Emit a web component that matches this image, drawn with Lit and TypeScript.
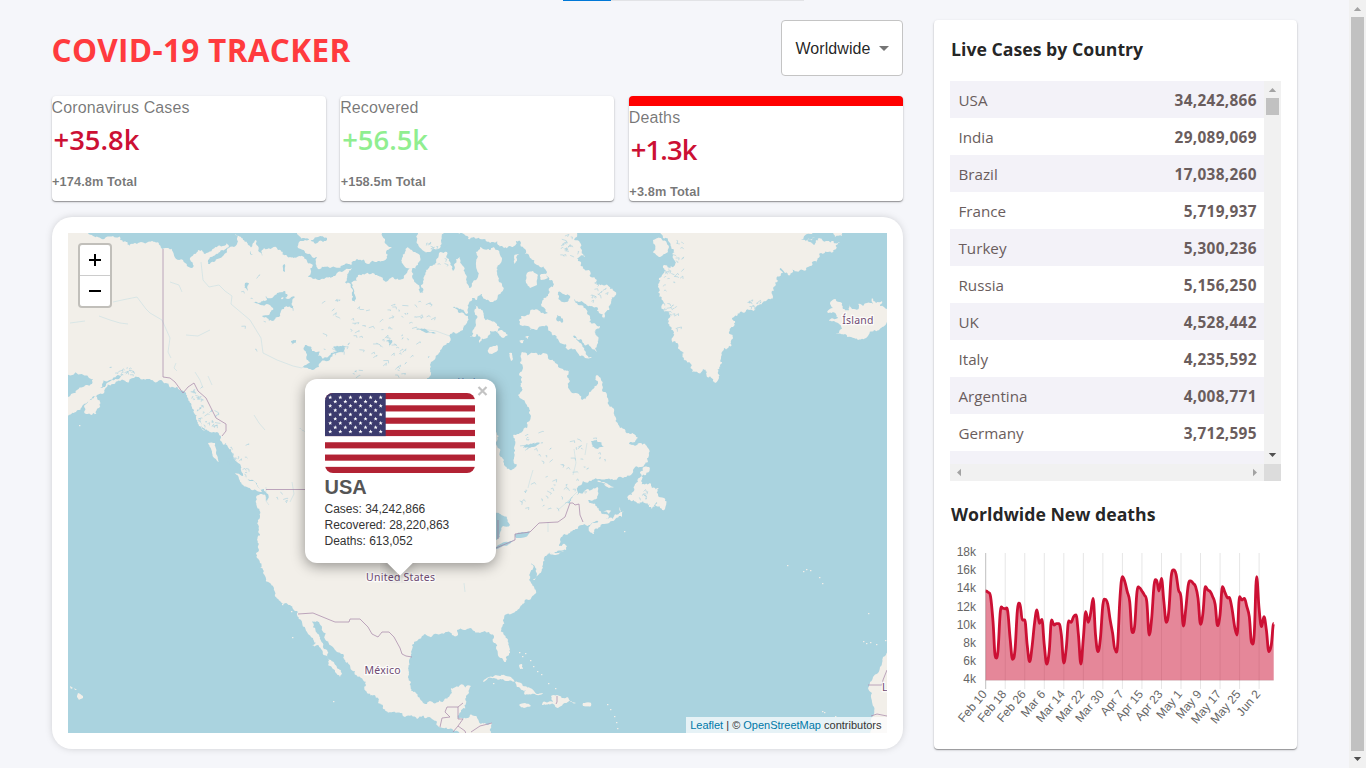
import { LitElement, html, svg, css } from "lit";
import { customElement } from "lit/decorators.js";

type Pt = [number, number];

const COUNTRIES: [string, string][] = [
  ["USA", "34,242,866"],
  ["India", "29,089,069"],
  ["Brazil", "17,038,260"],
  ["France", "5,719,937"],
  ["Turkey", "5,300,236"],
  ["Russia", "5,156,250"],
  ["UK", "4,528,442"],
  ["Italy", "4,235,592"],
  ["Argentina", "4,008,771"],
  ["Germany", "3,712,595"],
];

/* ---------- geometry helpers ---------- */

function parse(s: string): Pt[] {
  return s.trim().split(/\s+/).map((p) => p.split(",").map(Number) as Pt);
}

function random(seed: number) {
  let a = seed;
  return () => {
    a = (a * 1664525 + 1013904223) % 4294967296;
    return a / 4294967296;
  };
}

/* Midpoint displacement gives the coastlines their ragged edge. */
function coast(s: string, rough: number, seed: number): string {
  const rnd = random(seed);
  let pts = parse(s);
  for (let step = 0; step < 4; step++) {
    const out: Pt[] = [];
    pts.forEach((p, i) => {
      const q = pts[(i + 1) % pts.length];
      out.push(p);
      const dx = q[0] - p[0];
      const dy = q[1] - p[1];
      const len = Math.hypot(dx, dy);
      if (len > 2) {
        const k = (rnd() - 0.5) * rough * Math.min(1, 14 / len);
        out.push([(p[0] + q[0]) / 2 - dy * k, (p[1] + q[1]) / 2 + dx * k]);
      }
    });
    pts = out;
  }
  return "M" + pts.map((p) => p[0].toFixed(1) + "," + p[1].toFixed(1)).join("L") + "Z";
}

const MAINLAND = `60,225 86,225 88,233 93,236 113,236 123,242 137,244 148,242 162,249 173,252 183,260 194,266
190,258 202,250 205,254 217,247 227,242 229,246 220,252 211,257 208,264 214,262 224,255 234,247 238,241 235,234 243,240
250,253 253,255 253,243 256,240 259,252 262,256 264,248 277,248 290,257 307,261 313,265 311,272 308,277 320,280 331,278
345,270 352,268 347,274 345,282 352,294 355,302 354,290 351,283 358,275 371,274 377,275 383,280 392,277 403,279 408,270 412,268 414,280
420,293 424,294 421,285 423,278 433,265 440,252 447,252 450,262 453,271 456,259 460,257 464,267 466,280 469,288 473,282 477,270 480,247
493,247 502,258 499,265 497,272 503,287 498,295 490,302 482,294 477,300 472,298 469,303 467,314 458,308 453,307 460,313 468,316 467,323 463,330 453,332 449,343
437,355 430,365 427,378 430,400 455,425 480,430 496,432 498,448 504,460 510,470 517,465 515,450 513,435 522,432 527,428 529,412 527,405 518,395 522,382 523,368 520,362
522,352 533,353 543,353 550,360 558,365 563,369 570,370 570,381 572,393 582,400 588,396 592,390 597,375 602,385 607,395 613,408 616,418 620,428
630,434 638,438 630,442 623,449 632,445 640,443 648,448 648,462 641,467 633,470 623,478 612,479 600,479 583,481 577,490 570,500
562,507 557,510 570,503 577,495 587,489 597,487 598,495 588,500 591,503 597,507 602,514 609,517 605,521 596,521 590,525 582,525 573,530 563,535
560,540 559,546 567,546 566,550 555,552 547,555 543,562 543,568 537,576 533,580 536,572 531,563 530,573 529,580 534,587 534,595 529,600 522,605 513,613 503,620
502,627 504,635 509,646 509,655 506,662 502,658 497,650 494,643 494,636 489,632 485,631 480,633 472,629 464,630 457,630 458,635 452,635 447,632 437,634
425,634 418,640 412,645 411,652 409,662 409,672 411,682 418,697 427,704 436,703 443,702 449,697 451,688 460,685 471,686 469,693 466,703 461,712 458,718 463,719
477,718 492,723 491,733 491,740 462,740 455,731 443,728 437,722 430,717 417,719 405,717 390,712 378,703 367,693 366,685 363,680 355,671 343,658 343,654 335,650
330,645 325,639 322,628 319,622 312,620 313,627 317,633 321,641 327,650 331,660 337,668 342,674 340,677 335,672 328,665 327,656 321,649 312,645 316,643
311,637 307,632 301,620 298,612 290,605 280,601 275,592 270,583 265,576 260,568 259,560 257,558 259,550 257,540 259,530 260,517 257,507 256,497 262,494 267,501 268,494
264,489 257,483 253,480 245,478 241,470 237,462 233,455 227,445 221,438 217,432 210,432 203,428 197,415 192,407 188,398 181,391 173,387 166,383 160,380 148,379 137,377 133,378
128,383 120,381 113,384 105,389 102,394 97,395 89,401 83,405 76,412 60,422 60,398 68,397 77,390 83,387 92,384 100,375 104,369 112,367 108,372 103,378 100,388 106,384 112,380 119,379
121,376 113,378 103,380 60,370`;

const ISLANDS: [string, number][] = [
  ["300,225 297,234 318,237 327,238 326,241 305,240 299,242 298,248 308,254 317,257 316,262 320,269 330,268 343,265 357,259 368,264 378,261 387,258 386,252 392,248 385,239 382,233 382,225", 0.5],
  ["416,228 417,240 418,244 430,252 438,249 441,241 444,233 444,228", 0.5],
  ["402,258 405,252 408,247 415,252 420,257 418,265 411,269 405,267", 0.5],
  ["455,225 459,234 468,239 480,239 490,243 502,246 512,247 516,241 521,243 525,254 530,258 537,265 547,272 553,287 548,296 542,303 548,313 541,313 530,312 521,316 520,325 530,330 543,326 551,332 560,343 568,350 577,352 585,358 592,358 584,350 579,342 573,336 581,339 591,347 597,352 597,345 600,338 593,332 600,326 589,322 587,313 578,305 574,299 584,303 592,306 599,313 604,319 609,310 611,302 616,295 610,289 597,280 589,270 581,262 577,258 585,257 581,249 574,240 577,233 577,225", 0.65],
  ["475,305 479,309 483,312 489,320 500,328 497,332 490,331 487,338 480,343 477,334 470,337 474,329", 0.6],
  ["497,332 502,330 508,335 503,338", 0.4],
  ["488,352 490,347 497,345 498,350 492,354", 0.4],
  ["509,353 512,353 513,359 511,361", 0.3],
  ["527,273 533,271 538,275 537,285 530,288 526,283", 0.3],
  ["540,275 546,274 548,278 541,280", 0.4],
  ["519,341 524,340 523,343", 0.4],
  ["525,337 529,336 528,339", 0.4],
  ["514,256 519,254 517,261 514,264", 0.5],
  ["653,225 655,233 663,238 670,243 674,250 673,258 675,265 664,265 659,278 659,288 662,305 666,311 668,322 672,338 680,350 684,358 692,372 703,369 707,377 715,383 719,378 722,362 724,348 733,338 735,321 732,318 740,312 749,310 753,311 767,300 774,290 775,283 783,273 780,268 788,275 800,270 817,263 828,252 840,243 827,241 819,238 805,244 815,237 800,239 812,234 817,225", 0.7],
  ["653,240 661,238 669,247 668,252 660,257 653,252", 0.4],
  ["829,225 835,237 842,236 843,225", 0.4],
  ["827,312 833,308 830,304 835,299 842,303 845,310 849,310 850,304 854,309 859,308 858,304 863,306 867,303 873,304 872,298 876,303 882,301 880,306 884,307 888,313 888,320 882,327 874,330 868,336 858,340 851,337 845,334 836,334 842,329 838,323 829,321 838,318 833,312", 0.5],
  ["628,500 633,492 637,480 640,472 644,467 649,467 646,475 641,481 650,483 652,488 659,488 658,494 664,498 665,509 660,508 657,502 649,507 652,501 643,501", 0.8],
  ["597,481 603,482 614,487 609,488", 0.3],
  ["590,526 594,523 601,521 613,519 619,507 621,512 624,511 622,517 612,521 600,527 594,534 590,532", 0.6],
  ["603,511 611,511 609,514", 0.4],
  ["543,556 553,553 564,551 556,555", 0.3],
  ["483,682 489,677 496,675 511,677 521,683 530,688 543,693 535,694 524,694 526,690 517,687 512,681 503,679 494,678", 0.4],
  ["551,696 557,695 567,697 576,703 563,704 558,708 551,704 542,705 543,702 553,702", 0.4],
  ["519,705 525,703 531,706 524,708", 0.3],
  ["583,703 591,703 591,706 583,706", 0.3],
  ["888,652 883,657 880,667 873,677 870,682 868,688 872,693 874,707 871,720 870,738 890,738", 0.3],
  ["85,408 88,402 97,397 100,402 97,409 92,415 86,414", 0.7],
  ["208,443 215,443 216,453 219,462 212,453", 0.3],
  ["235,473 242,476 252,481 258,487 262,492 257,491 247,487 239,479", 0.4],
  ["78,693 83,696 83,698 79,700 77,697", 0.2],
  ["74,688 77,690 75,690", 0.2],
  ["70,686 73,688 71,689", 0.2],
  ["519,665 522,664 523,669 520,669", 0.3],
  ["196,415 201,423 205,431 199,426", 0.5],
];

const LAKES: [string, number][] = [
  ["253,302 258,303 267,300 266,296 275,295 285,291 287,294 281,299 288,299 295,297 293,308 286,306 281,311 279,317 272,321 262,316 269,315 273,308 267,304 259,304", 0.6],
  ["302,368 306,365 310,362 306,353 305,345 312,351 320,352 318,356 323,359 331,353 340,347 346,346 340,352 333,354 328,361 321,362 319,367 313,370", 0.5],
  ["490,512 499,513 507,517 510,525 503,526 500,537 496,540 490,538", 0.4],
  ["496,547 505,542 515,539 511,543 503,546 496,549", 0.3],
  ["515,534 522,532 530,531 528,535 516,538", 0.3],
  ["291,341 296,340 297,344 292,343", 0.5],
  ["306,432 302,430 299,428", 0.3],
  ["558,292 563,294 570,298 566,302 560,300 559,296", 0.6],
  ["557,315 563,319 562,323 557,321", 0.6],
  ["591,441 598,442 604,446 598,449 594,447", 0.8],
  ["524,447 532,444 540,443 532,447", 0.5],
  ["386,341 392,340 390,347", 0.6],
  ["333,347 341,346 345,349 337,351", 0.4],
  ["283,265 285,264 285,272 283,271", 0.2],
  ["245,283 249,283 247,291", 0.4],
  ["416,329 427,330 436,333 427,333", 0.4],
];

const RIVERS = [
  "201,262 203,280 209,287 219,285 225,291 232,296 231,304 250,320 261,338 263,353 277,360 293,366 302,368",
  "113,302 127,299 137,297 146,309 150,313 162,320 170,338 168,352 171,358",
  "70,323 85,321",
  "99,316 110,320 120,323 128,324",
  "558,510 566,503 577,492",
  "455,338 436,331 420,329",
  "170,282 179,285 182,292",
  "210,330 198,336 186,335",
  "254,415 259,423 265,430",
  "195,372 200,380 203,388",
  "208,376 212,385",
  "176,363 174,368 177,371",
  "292,482 294,494 290,502",
  "533,470 530,480 528,488",
  "574,449 576,463 573,475",
  "587,443 585,455",
  "464,583 465,592",
  "266,487 266,501 269,505",
  "548,522 548,532",
];

const BORDERS = [
  "163,249 163,377 170,378 175,382 183,393 188,387 194,383 198,391 206,398 216,418 226,424 226,431 222,436",
  "266,489.5 320,489.5",
  "496,548 515,540 515,534 530,532 539,523 558,522 565,517 570,503 573,503 575,505 579,504 580,515 583,522",
  "298,614 313,613 330,620 335,622 349,622 350,619 360,619 368,627 372,634 378,637 382,632 389,632 394,637 400,648 402,654 406,656 412,657",
  "463,703 458,707 447,707 445,712 450,717 442,718 440,727",
  "458,707 458,719 463,719 458,726 453,732",
  "458,726 465,731 466,734",
  "471,732 480,726 492,723",
  "498,520 498,539",
  "868,685 882,685 883,680 887,670",
  "871,716 877,714 887,716",
  "557,696 557,702 556,704",
];

const SPECKS: [number, number][] = [
  [519, 652], [522, 656], [525, 653], [530, 660], [533, 666], [537, 671], [541, 674], [548, 683], [555, 688],
  [607, 704], [610, 709], [614, 716], [616, 722], [617, 728], [787, 565], [803, 571], [806, 569], [810, 570],
  [819, 577], [822, 583], [868, 613], [863, 641], [866, 643], [870, 642], [876, 644], [885, 640], [822, 711], [824, 712], [835, 716],
  [292, 637], [282, 604], [291, 611], [333, 701], [624, 531], [79, 425], [493, 683],
];

function scatter(seed: number, n: number, x: number, y: number, w: number, h: number) {
  const r = random(seed);
  let d = "";
  for (let i = 0; i < n; i++) {
    const px = x + r() * w;
    const py = y + r() * h;
    const len = 1 + r() * 4;
    const ang = r() * 1.4 - 0.9;
    const mx = px + Math.cos(ang) * len;
    const my = py + Math.sin(ang) * len;
    d += `M${px.toFixed(1)},${py.toFixed(1)}L${mx.toFixed(1)},${my.toFixed(1)}l${(r() * 3 - 1.5).toFixed(1)},${(r() * 3).toFixed(1)}`;
  }
  return d;
}

const SHIELD =
  scatter(11, 46, 330, 300, 90, 72) + scatter(5, 26, 382, 300, 50, 60) + scatter(9, 14, 235, 270, 90, 90) +
  scatter(21, 44, 520, 432, 85, 60) + scatter(31, 14, 512, 488, 55, 22) + scatter(41, 14, 332, 345, 95, 33);
const FJORDS =
  scatter(3, 30, 222, 445, 25, 30) + scatter(8, 24, 196, 405, 20, 22) + scatter(14, 14, 115, 368, 25, 10) +
  scatter(17, 32, 661, 268, 18, 66) + scatter(19, 20, 560, 236, 20, 20) + scatter(23, 14, 590, 282, 18, 20) +
  scatter(27, 14, 746, 300, 14, 9) + scatter(29, 12, 672, 240, 10, 40) + scatter(33, 16, 425, 238, 22, 30) +
  scatter(37, 10, 637, 484, 22, 18) + scatter(43, 12, 190, 388, 12, 14) + scatter(47, 4, 270, 484, 25, 25);

/* ---------- chart data: height of each day's value on the plot ---------- */

const DAYS = [
  168, 172, 185, 260, 368, 350, 230, 220, 221, 228, 310, 373, 345, 225, 205, 255, 255, 330, 380, 335,
  265, 225, 265, 253, 330, 387, 350, 255, 270, 266, 266, 300, 384, 340, 258, 262, 245, 240, 300, 387,
  310, 230, 262, 235, 190, 300, 350, 310, 210, 193, 207, 255, 295, 345, 335, 190, 125, 140, 170, 200,
  292, 275, 170, 158, 168, 180, 200, 300, 250, 150, 135, 168, 130, 200, 262, 230, 125, 105, 118, 165,
  185, 273, 220, 150, 138, 145, 155, 190, 268, 235, 155, 165, 170, 185, 208, 272, 240, 155, 172, 188,
  190, 225, 275, 300, 185, 195, 190, 215, 245, 325, 300, 125, 220, 275, 245, 285, 350, 330, 265,
];

function chartLine(): string {
  const p: Pt[] = DAYS.map((v, i) => [35.7 + (i * 288) / (DAYS.length - 1), v / 3 - 5]);
  const slope = p.map((_, i) => {
    if (i === 0 || i === p.length - 1) return 0;
    const a = p[i][1] - p[i - 1][1];
    const b = p[i + 1][1] - p[i][1];
    return a * b <= 0 ? 0 : (a + b) / 2;
  });
  let d = `M${p[0][0]},${p[0][1]}`;
  for (let i = 1; i < p.length; i++) {
    const w = (p[i][0] - p[i - 1][0]) * 0.38;
    d += `C${(p[i - 1][0] + w).toFixed(2)},${(p[i - 1][1] + slope[i - 1] * 0.38).toFixed(2)} ${(p[i][0] - w).toFixed(2)},${(p[i][1] - slope[i] * 0.38).toFixed(2)} ${p[i][0].toFixed(2)},${p[i][1].toFixed(2)}`;
  }
  return d;
}

const X_TICKS = ["Feb 10", "Feb 18", "Feb 26", "Mar 6", "Mar 14", "Mar 22", "Mar 30", "Apr 7", "Apr 15", "Apr 23", "May 1", "May 9", "May 17", "May 25", "Jun 2"];
const Y_TICKS = ["18k", "16k", "14k", "12k", "10k", "8k", "6k", "4k"];

@customElement("world-map")
class WorldMap extends LitElement {
  static styles = css`
    :host { display: block; position: relative; width: 819px; height: 500px; overflow: hidden; background: #aad3df; font-family: "Liberation Sans", Arial, sans-serif; }
    .tiles { display: block; }
    .land { fill: #f2efe9; }
    .lake { fill: #aad3df; }
    .river { fill: none; stroke: #aad3df; stroke-width: 0.7; opacity: 0.5; }
    .speck { fill: none; stroke: #aad3df; stroke-width: 0.9; opacity: 0.7; }
    .border { fill: none; stroke: #a98bab; stroke-width: 1; opacity: 0.75; }
    .label { font-family: "Noto Sans", sans-serif; font-size: 10.5px; letter-spacing: 0.25px; fill: #6f4b73; stroke: #fff; stroke-opacity: 0.8; stroke-width: 2.4px; paint-order: stroke; text-anchor: middle; }
    .sea { font-size: 9px; letter-spacing: 0; fill: #4d6fae; stroke: none; }
    .zoom { position: absolute; left: 10px; top: 10px; width: 30px; border: 2px solid rgba(0, 0, 0, 0.2); border-radius: 4px; background: #fff; background-clip: padding-box; }
    .zoom div { height: 30px; display: grid; place-items: center; }
    .zoom div:first-child { border-bottom: 1px solid #ccc; }
    .popup { position: absolute; left: 237px; top: 146px; width: 191px; height: 184px; }
    .tipbox { position: absolute; left: 75.5px; top: 184px; width: 40px; height: 20px; overflow: hidden; }
    .tip { width: 18px; height: 18px; margin: -9px auto 0; transform: rotate(45deg); background: #fff; box-shadow: 0 3px 14px rgba(0, 0, 0, 0.4); }
    .bubble { box-sizing: border-box; height: 184px; padding: 14px 20px; border-radius: 12px; background: #fff; box-shadow: 0 3px 14px rgba(0, 0, 0, 0.4); color: #333; }
    .flag { display: block; border-radius: 8px; }
    .name { font-size: 20px; font-weight: 700; line-height: 28px; color: #555; }
    .row { font-size: 12px; line-height: 16px; }
    .close { position: absolute; right: 8px; top: 7px; }
    .credit { position: absolute; right: 0; bottom: 0; padding: 0 5px 0 4px; height: 16px; line-height: 16px; font-size: 11px; color: #333; background: rgba(255, 255, 255, 0.7); white-space: nowrap; }
    .credit a { color: #0078a8; }
  `;

  private flag() {
    const stars = [];
    for (let r = 0; r < 9; r++) {
      const n = r % 2 ? 5 : 6;
      for (let c = 0; c < n; c++) {
        const x = 5.2 + c * 10.1 + (r % 2 ? 5.05 : 0);
        const y = 4.4 + r * 4.28;
        stars.push(svg`<path transform="translate(${x} ${y})" fill="#fff" d="M0-2.1 .6-.65 2-.65 .9.3 1.3 1.8 0 .9-1.3 1.8-.9.3-2-.65-.6-.65Z"/>`);
      }
    }
    return html`<svg class="flag" width="150" height="80" viewBox="0 0 150 80">
      <rect width="150" height="80" fill="#fff" />
      ${[0, 1, 2, 3, 4, 5, 6].map((i) => svg`<rect y=${i * 12.31} width="150" height="6.15" fill="#b22234"/>`)}
      <rect width="60.7" height="43.1" fill="#3c3b6e" />
      ${stars}
    </svg>`;
  }

  render() {
    return html`
      <svg class="tiles" width="819" height="500" viewBox="68 233 819 500">
        <path class="land" d=${coast(MAINLAND, 0.55, 7)} />
        ${ISLANDS.map(([s, r], i) => svg`<path class="land" d=${coast(s, r, 40 + i)}/>`)}
        ${SPECKS.map(([x, y]) => svg`<rect class="land" x=${x} y=${y} width="1.4" height="1.2"/>`)}
        ${LAKES.map(([s, r], i) => svg`<path class="lake" d=${coast(s, r, 90 + i)}/>`)}
        <path class="speck" d=${SHIELD} />
        <path class="speck" d=${FJORDS} />
        ${RIVERS.map((s) => svg`<polyline class="river" points=${s}/>`)}
        ${BORDERS.map((s) => svg`<polyline class="border" points=${s}/>`)}
        <text class="label" x="400.7" y="581">United States</text>
        <text class="label" x="382.7" y="674">México</text>
        <text class="label" x="858" y="323.5">Ísland</text>
        <text class="label sea" x="474" y="384.5">Hudson</text>
        <text class="label" x="885" y="691">L</text>
      </svg>
      <div class="zoom">
        <div><svg width="14" height="14" viewBox="0 0 14 14"><path d="M1 7H13M7 1V13" stroke="#000" stroke-width="2" /></svg></div>
        <div><svg width="14" height="14" viewBox="0 0 14 14"><path d="M1 7H13" stroke="#000" stroke-width="2" /></svg></div>
      </div>
      <div class="popup">
        <div class="bubble">
          ${this.flag()}
          <div class="name">USA</div>
          <div class="row">Cases: 34,242,866</div>
          <div class="row">Recovered: 28,220,863</div>
          <div class="row">Deaths: 613,052</div>
        </div>
        <div class="tipbox"><div class="tip"></div></div>
        <svg class="close" width="11" height="10" viewBox="0 0 11 10"><path d="M1.5 1 9.5 9M9.5 1 1.5 9" stroke="#c3c3c3" stroke-width="2.2" /></svg>
      </div>
      <div class="credit"><a>Leaflet</a> | © <a>OpenStreetMap</a> contributors</div>
    `;
  }
}

@customElement("deaths-chart")
class DeathsChart extends LitElement {
  static styles = css`
    :host { display: block; margin-top: 13px; height: 190px; }
    svg { display: block; }
    text { font-family: "Liberation Sans", Arial, sans-serif; font-size: 12px; fill: #666; text-anchor: end; }
    .grid { stroke: rgba(0, 0, 0, 0.1); }
    .axis { stroke: rgba(0, 0, 0, 0.25); }
    .area { fill: rgba(204, 16, 52, 0.5); }
    .line { fill: none; stroke: #cc1034; stroke-width: 2.8; stroke-linejoin: round; }
  `;

  render() {
    const line = chartLine();
    return html`<svg width="331" height="190" viewBox="0 0 331 190">
      ${X_TICKS.map((t, i) => {
        const x = 35.7 + i * 19.53;
        return svg`<line class=${i ? "grid" : "axis"} x1=${x} x2=${x} y1="13" y2="149"/>
          <text transform="translate(${x - 0.5} 152.5) rotate(-50)" y="3">${t}</text>`;
      })}
      ${Y_TICKS.map((t, i) => svg`<text x="26" y=${16 + i * 18.2}>${t}</text>`)}
      <line class="grid" x1="35.7" x2="323.7" y1="140.3" y2="140.3" />
      <path class="area" d="${line}L323.7,140.3L35.7,140.3Z" />
      <path class="line" d=${line} />
    </svg>`;
  }
}

@customElement("app-root")
class AppRoot extends LitElement {
  static styles = css`
    :host { display: block; position: relative; height: 768px; overflow: hidden; background: #f5f6fa; font-family: "Liberation Sans", Arial, sans-serif; }
    .page { display: flex; height: 768px; }
    .content { flex: 1; display: flex; gap: 31px; padding: 20px 52px 19px 51.5px; box-sizing: border-box; }
    .left { width: 851.5px; display: flex; flex-direction: column; }
    .header { display: flex; justify-content: space-between; align-items: center; height: 56px; margin-bottom: 20px; }
    .title { margin: 0; font: 700 31.5px/40px "Open Sans", "Noto Sans", sans-serif; letter-spacing: 0.32px; color: #ff3b3e; white-space: nowrap; padding-top: 3px; }
    .select { box-sizing: border-box; width: 122px; height: 56px; border: 1px solid #c4c4c4; border-radius: 4px; background: #fff; display: flex; align-items: center; gap: 9px; padding-left: 13.5px; font-size: 16px; letter-spacing: 0.06px; color: rgba(0, 0, 0, 0.87); }
    .select span { padding-top: 2px; }
    .cards { display: flex; gap: 14.5px; height: 105px; margin-bottom: 16px; }
    .card { box-sizing: border-box; flex: 1; height: 105px; border-radius: 4px; background: #fff; overflow: hidden; }
    .raised { box-shadow: 0 1px 1px rgba(0, 0, 0, 0.32), 0 1px 3px rgba(0, 0, 0, 0.16); }
    .card.active { border-top: 10px solid red; }
    .label { font-size: 16px; line-height: 23px; letter-spacing: 0.12px; color: rgba(0, 0, 0, 0.54); }
    .today { font: 600 27.4px/42px "Open Sans", "Noto Sans", sans-serif; color: #cc1034; padding-left: 2px; }
    .today.ok { color: #90ee90; }
    .today.tight { letter-spacing: -0.9px; }
    .total { font-size: 12.8px; font-weight: 700; line-height: 20px; letter-spacing: 0.08px; margin-top: 11px; color: rgba(0, 0, 0, 0.54); padding-left: 0.5px; }
    .map { box-sizing: border-box; height: 532px; padding: 16px; border-radius: 20px; background: #fff; box-shadow: 0 0 8px -2px rgba(0, 0, 0, 0.25); }
    .right { box-sizing: border-box; width: 363px; height: 729px; padding: 16px; border-radius: 4px; background: #fff; }
    .h3 { margin: 0; font: 700 17.7px/26px "Open Sans", "Noto Sans", sans-serif; color: rgba(0, 0, 0, 0.87); white-space: nowrap; padding-left: 1px; }
    .table { height: 400px; margin: 19px 0 20px; display: grid; grid-template: 383px 17px / 314px 17px; }
    .rows { overflow: hidden; background: #f3f2f8; }
    .row { box-sizing: border-box; display: flex; justify-content: space-between; align-items: center; height: 37px; padding: 2px 7.5px 0 8.5px; font: 400 15.2px/35px "Open Sans", "Noto Sans", sans-serif; color: #6a5d5d; background: #fff; }
    .row:nth-child(odd) { background: #f3f2f8; }
    .num { font-weight: 700; font-size: 15.4px; letter-spacing: 0.3px; margin-right: -0.3px; }
    .vbar { background: #f1f1f1; display: flex; flex-direction: column; align-items: center; }
    .hbar { background: #f1f1f1; display: flex; justify-content: space-between; }
    .corner { background: #dcdcdc; }
    .thumb { width: 13px; background: #c1c1c1; }
    .small { height: 17px; }
    .fill { flex: 1; }
    .btn { display: block; flex: none; }
    .spacer { flex: 1; }
    .progress { position: absolute; left: 563px; top: 0; width: 241px; height: 1px; background: #e2e3e6; }
    .progress div { width: 48px; height: 1px; background: #0078d7; }
  `;

  private arrow(deg: number, fill: string) {
    return html`<svg class="btn" width="17" height="17" viewBox="0 0 17 17">
      <path transform="rotate(${deg} 8.5 8.5)" d="M4.8 11 8.5 7 12.2 11Z" fill=${fill} />
    </svg>`;
  }

  private card(label: string, today: string, total: string, cls = "", tone = "") {
    return html`<div class="card raised ${cls}">
      <div class="label">${label}</div>
      <div class="today ${tone}">${today}</div>
      <div class="total">${total} Total</div>
    </div>`;
  }

  render() {
    return html`
      <div class="page">
        <div class="content">
          <div class="left">
            <div class="header">
              <h1 class="title">COVID-19 TRACKER</h1>
              <div class="select">
                <span>Worldwide</span>
                <svg width="10" height="5" viewBox="0 0 10 5"><path d="M0 0H10L5 5Z" fill="#757575" /></svg>
              </div>
            </div>
            <div class="cards">
              ${this.card("Coronavirus Cases", "+35.8k", "+174.8m")}
              ${this.card("Recovered", "+56.5k", "+158.5m", "", "ok")}
              ${this.card("Deaths", "+1.3k", "+3.8m", "active", "tight")}
            </div>
            <div class="map"><world-map></world-map></div>
          </div>
          <div class="right raised">
            <h3 class="h3">Live Cases by Country</h3>
            <div class="table">
              <div class="rows">
                ${COUNTRIES.map(([n, c]) => html`<div class="row"><span>${n}</span><span class="num">${c}</span></div>`)}
              </div>
              <div class="vbar">${this.arrow(0, "#a3a3a3")}<div class="thumb small"></div><div class="spacer"></div>${this.arrow(180, "#505050")}</div>
              <div class="hbar">${this.arrow(270, "#a3a3a3")}${this.arrow(90, "#a3a3a3")}</div>
              <div class="corner"></div>
            </div>
            <h3 class="h3">Worldwide New deaths</h3>
            <deaths-chart></deaths-chart>
          </div>
        </div>
        <div class="vbar">${this.arrow(0, "#a3a3a3")}<div class="thumb fill"></div>${this.arrow(180, "#505050")}</div>
      </div>
      <div class="progress"><div></div></div>
    `;
  }
}
